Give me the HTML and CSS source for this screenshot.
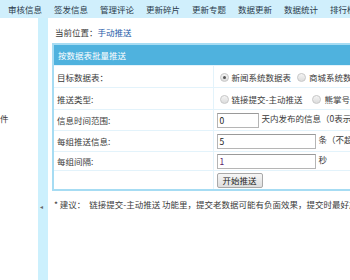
FILE: index.html
```html
<!DOCTYPE html>
<html>
<head>
<meta charset="utf-8">
<link rel="stylesheet" href="styles.css">
</head>
<body>
<div class="nav">
  <span class="nav-item">审核信息</span>
  <span class="nav-item">签发信息</span>
  <span class="nav-item">管理评论</span>
  <span class="nav-item">更新碎片</span>
  <span class="nav-item">更新专题</span>
  <span class="nav-item">数据更新</span>
  <span class="nav-item">数据统计</span>
  <span class="nav-item">排行榜</span>
</div>
<div class="main">
  <div class="side"><span class="side-text">件</span></div>
  <div class="strip"><span class="arrow">◂</span></div>
  <div class="content">
    <div class="crumb">当前位置：<a class="crumb-link">手动推送</a></div>
    <table class="form">
      <colgroup><col class="c1"><col class="c2"></colgroup>
      <tr class="head"><td colspan="2">按数据表批量推送</td></tr>
      <tr class="r22">
        <td class="lbl">目标数据表：</td>
        <td class="val"><span class="radio on"></span>新闻系统数据表<span class="radio second"></span>商城系统数据表</td>
      </tr>
      <tr class="r22">
        <td class="lbl">推送类型:</td>
        <td class="val"><span class="radio"></span>链接提交-主动推送<span class="radio second2"></span>熊掌号-新增内容</td>
      </tr>
      <tr class="r21">
        <td class="lbl">信息时间范围:</td>
        <td class="val"><span class="inp short">0</span>天内发布的信息（0表示不限）</td>
      </tr>
      <tr class="r21">
        <td class="lbl">每组推送信息:</td>
        <td class="val"><span class="inp long">5</span>条（不超过2000条）</td>
      </tr>
      <tr class="r19">
        <td class="lbl">每组间隔:</td>
        <td class="val"><span class="inp long purple">1</span>秒</td>
      </tr>
      <tr class="r19">
        <td class="lbl"></td>
        <td class="val"><span class="btn">开始推送</span></td>
      </tr>
    </table>
    <div class="note">* 建议：&nbsp; 链接提交-主动推送 功能里，提交老数据可能有负面效果，提交时最好加上时间范围。</div>
  </div>
</div>
</body>
</html>
```
FILE: styles.css
```css
html, body {
  margin: 0;
  padding: 0;
  background: #fff;
  font-family: "Noto Sans CJK SC", "Noto Sans", sans-serif;
  font-size: 8.5px;
  color: #3a3a3a;
  overflow: hidden;
}
.nav {
  height: 18px;
  background: #d0effc;
  display: flex;
  align-items: center;
  gap: 12px;
  padding-left: 8px;
  white-space: nowrap;
  overflow: hidden;
}
.nav-item {
  color: #2b3a4a;
  line-height: 18px;
}
.main {
  display: flex;
  height: 262px;
}
.side {
  width: 38px;
  flex: none;
  overflow: hidden;
}
.side-text {
  display: block;
  margin-top: 94px;
  line-height: 12px;
}
.strip {
  width: 10px;
  flex: none;
  background: #ccf0fd;
  position: relative;
}
.arrow {
  position: absolute;
  left: 2px;
  top: 184px;
  font-size: 6px;
  color: #666;
}
.content {
  flex: 1;
  padding-left: 4px;
  white-space: nowrap;
  overflow: hidden;
}
.crumb {
  margin-top: 8px;
  padding-left: 3px;
  line-height: 12px;
  height: 13px;
}
.crumb-link {
  color: #1e5ba8;
}
.form {
  margin-top: 4px;
  border-collapse: collapse;
  border: 2px solid #a6dcf3;
  width: 340px;
  table-layout: fixed;
}
.c1 { width: 160px; }
.form td {
  padding: 0;
  border-top: 1px solid #e3f3fb;
  line-height: 12px;
  overflow: hidden;
}
.head td {
  background: #4fb2de;
  color: #fff;
  height: 20px;
  padding-left: 4px;
  border-top: none;
}
.r22 td { height: 21px; }
.r21 td { height: 20px; }
.r19 td { height: 18px; }
.lbl {
  padding-left: 3px !important;
  border-right: 1px solid #e3f3fb;
}
.val {
  padding-left: 3px !important;
}
.radio {
  display: inline-block;
  width: 7px;
  height: 7px;
  border-radius: 50%;
  border: 1px solid #c9c9c9;
  background: linear-gradient(#f4f4f4, #dcdcdc);
  vertical-align: -1px;
  margin: 0 3px 0 3px;
  position: relative;
}
.radio.on::after {
  content: "";
  position: absolute;
  left: 2px;
  top: 2px;
  width: 3px;
  height: 3px;
  border-radius: 50%;
  background: #555;
}
.radio.second {
  margin-left: 6px;
}
.radio.second2 {
  margin-left: 10px;
}
.inp {
  display: inline-block;
  box-sizing: border-box;
  height: 15px;
  line-height: 13px;
  border: 1px solid #b5b5b5;
  border-top-color: #9a9a9a;
  padding-left: 2px;
  vertical-align: middle;
  color: #222;
  margin-right: 3px;
  background: #fff;
}
.inp.short { width: 42px; }
.inp.long { width: 99px; }
.inp.purple { color: #5a1a6a; }
.btn {
  display: inline-block;
  height: 15px;
  line-height: 13px;
  box-sizing: border-box;
  padding: 0 5px;
  border: 1px solid #a9a9a9;
  border-radius: 2px;
  background: linear-gradient(#f6f6f6, #dedede);
  color: #222;
  vertical-align: middle;
}
.note {
  margin-top: 7px;
  padding-left: 2px;
  line-height: 12px;
}
```
